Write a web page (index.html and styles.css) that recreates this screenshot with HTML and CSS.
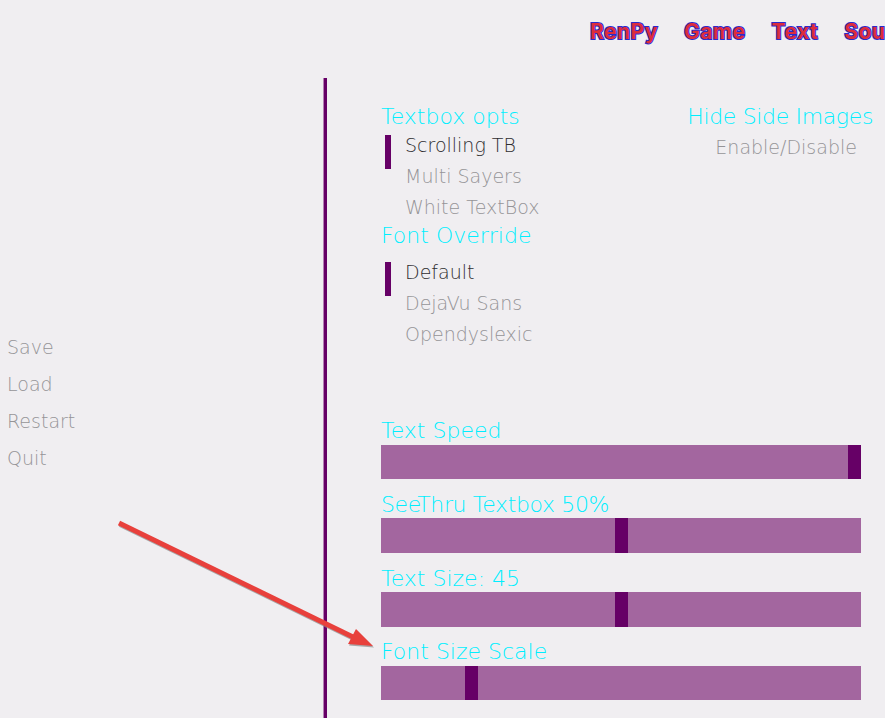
FILE: index.html
```html
<!DOCTYPE html>
<html>
<head>
	<meta charset="UTF-8">
	<title>Preferences</title>
	<link rel="stylesheet" href="styles.css">
</head>
<body>
	<header class="topbar">
		<nav class="tabs">
			<span class="tab">RenPy</span>
			<span class="tab">Game</span>
			<span class="tab">Text</span>
			<span class="tab">Sound</span>
			<span class="tab">Access</span>
		</nav>
	</header>

	<div class="main">
		<aside class="sidemenu">
			<div class="menu-item">Save</div>
			<div class="menu-item">Load</div>
			<div class="menu-item">Restart</div>
			<div class="menu-item">Quit</div>
		</aside>

		<section class="prefs">
			<div class="prefs-top">
				<div class="col">
					<div class="group-label">Textbox opts</div>
					<div class="option selected">Scrolling TB</div>
					<div class="option">Multi Sayers</div>
					<div class="option">White TextBox</div>

					<div class="group-label">Font Override</div>
					<div class="option selected first">Default</div>
					<div class="option">DejaVu Sans</div>
					<div class="option">Opendyslexic</div>
				</div>
				<div class="col col-right">
					<div class="group-label tight">Hide Side Images</div>
					<div class="option toggle">Enable/Disable</div>
				</div>
			</div>

			<div class="sliders">
				<div class="slider">
					<div class="group-label">Text Speed</div>
					<div class="bar"><div class="thumb" style="--v: 1"></div></div>
				</div>
				<div class="slider">
					<div class="group-label tight">SeeThru Textbox 50%</div>
					<div class="bar"><div class="thumb" style="--v: 0.5"></div></div>
				</div>
				<div class="slider">
					<div class="group-label">Text Size: 45</div>
					<div class="bar"><div class="thumb" style="--v: 0.5"></div></div>
				</div>
				<div class="slider">
					<div class="group-label">Font Size Scale</div>
					<div class="bar"><div class="thumb" style="--v: 0.18"></div></div>
				</div>
			</div>
		</section>
	</div>

	<!-- annotation arrow drawn over the screen -->
	<svg class="arrow" width="885" height="718" viewBox="0 0 885 718">
		<g fill="#8a8a8a" stroke="#8a8a8a" opacity="0.7">
			<line x1="120" y1="524.5" x2="354" y2="638.5" stroke-width="5"/>
			<polygon points="374,647.5 357,630.5 349,645.5" stroke="none"/>
		</g>
		<g fill="#e8403c" stroke="#e8403c">
			<line x1="119" y1="523" x2="353" y2="637" stroke-width="5"/>
			<polygon points="373,646 356,629 348,644" stroke="none"/>
		</g>
	</svg>
</body>
</html>
```

FILE: styles.css
```css
body {
	margin: 0;
	width: 885px;
	height: 718px;
	overflow: hidden;
	position: relative;
	background-color: #f0eef1;
	font-family: "DejaVu Sans", sans-serif;
	font-weight: 200;
}

.topbar {
	height: 78px;
	box-sizing: border-box;
	padding-top: 19px;
	overflow: hidden;
}
.tabs {
	display: flex;
	gap: 26px;
	padding-left: 590px;
	white-space: nowrap;
}
.tab {
	font-family: "Inter", sans-serif;
	font-weight: 700;
	font-size: 21px;
	line-height: 25px;
	letter-spacing: 0.5px;
	color: #dc2d3c;
	-webkit-text-stroke: 2px #2a2acc;
	paint-order: stroke fill;
}

.main {
	display: flex;
	height: 640px;
}

.sidemenu {
	width: 324px;
	flex-shrink: 0;
	box-sizing: border-box;
	padding: 251px 0 0 7px;
}
.menu-item {
	font-size: 19px;
	line-height: 37px;
	color: #959497;
}

.prefs {
	flex: 1;
	border-left: 3px solid #660066;
	box-shadow: -1px 0 0 #b47fb4;
	padding: 26px 12px 0 54px;
}

.prefs-top {
	display: flex;
	justify-content: space-between;
}

.group-label {
	font-size: 22px;
	line-height: 26px;
	color: #00eeff;
}
.group-label.tight {
	letter-spacing: -0.35px;
}

.option {
	position: relative;
	font-size: 19px;
	line-height: 31px;
	padding-left: 24px;
	color: #959497;
}
.option:first-of-type {
	margin-top: 2px;
}
.option.first {
	margin-top: 8px;
}
.option.selected {
	color: #2e2d30;
}
.option.selected::before {
	content: "";
	position: absolute;
	left: 4px;
	top: 5px;
	width: 6px;
	height: 34px;
	background-color: #660066;
}

.col-right {
	text-align: center;
}
.option.toggle {
	margin-top: 2px;
	padding-left: 12px;
}

.sliders {
	margin-top: 67px;
}
.slider {
	margin-bottom: 11.8px;
}
.slider .group-label {
	line-height: 27px;
	margin-bottom: 0.5px;
}
.bar {
	display: flex;
	width: 480px;
	height: 34.5px;
	background-color: #a3669f;
}
.thumb {
	width: 13px;
	height: 100%;
	margin-left: calc((100% - 13px) * var(--v));
	background-color: #660066;
}

.arrow {
	position: absolute;
	left: 0;
	top: 0;
	pointer-events: none;
}
```
